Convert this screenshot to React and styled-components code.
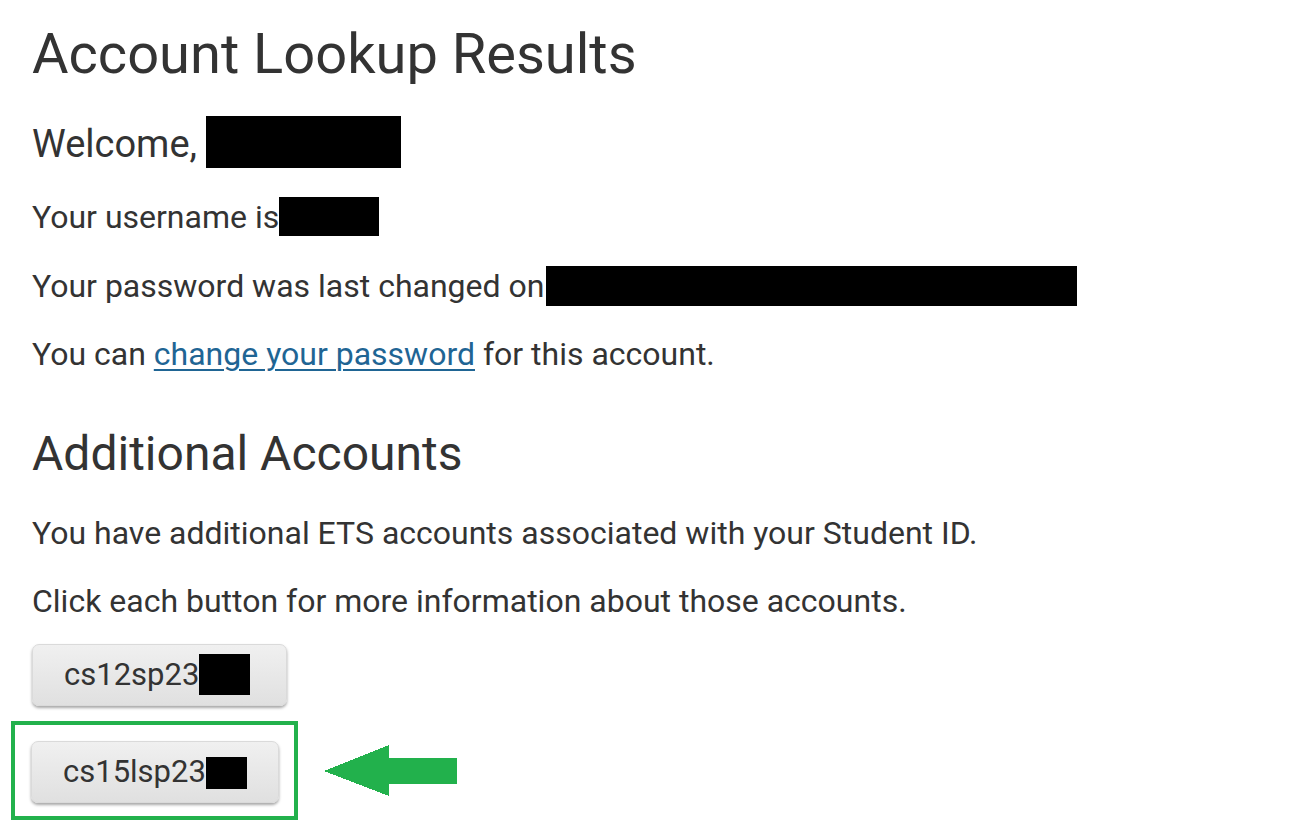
import React from "react";
import styled, { createGlobalStyle } from "styled-components";

const Global = createGlobalStyle`
  html, body { margin: 0; padding: 0; background: #ffffff; }
  body { font-family: Roboto, "Liberation Sans", Arial, sans-serif; color: #333333; }
`;

const Page = styled.main`
  padding: 23px 0 0 32px;
  display: flex;
  flex-direction: column;
  align-items: flex-start;
`;

const Title = styled.h1`
  margin: 0;
  font-size: 56px;
  font-weight: 400;
  line-height: 62px;
  color: #333333;
`;

const Welcome = styled.h3`
  margin: 31px 0 0;
  font-size: 38px;
  font-weight: 400;
  line-height: 56px;
`;

const SubTitle = styled.h2`
  margin: ${(p) => p.$mt}px 0 0;
  font-size: 48px;
  font-weight: 400;
  line-height: 52px;
`;

const Para = styled.p`
  margin: ${(p) => p.$mt}px 0 0;
  font-size: 32px;
  line-height: 42px;
`;

const Link = styled.a`
  color: #1f6594;
  text-decoration: underline;
  text-decoration-thickness: 2px;
  text-underline-offset: 4px;
`;

const Redact = styled.span`
  display: inline-block;
  background: #000000;
  width: ${(p) => p.$w}px;
  height: ${(p) => p.$h}px;
  margin-left: ${(p) => p.$ml || 0}px;
  vertical-align: ${(p) => -p.$drop}px;
`;

const AccountButton = styled.button`
  display: block;
  box-sizing: border-box;
  width: ${(p) => p.$w}px;
  height: 62px;
  margin: ${(p) => p.$mt || 0}px 0 0;
  padding: 0 0 0 31px;
  text-align: left;
  font-family: Roboto, "Liberation Sans", Arial, sans-serif;
  font-size: 31px;
  line-height: 60px;
  color: #333333;
  background: linear-gradient(#f0f0f0, #e0e0e0);
  border: 1px solid #dadada;
  border-radius: 7px;
  box-shadow: 0 2px 3px rgba(0, 0, 0, 0.35);
  cursor: pointer;
  white-space: nowrap;
`;

const HighlightRow = styled.div`
  display: flex;
  align-items: center;
  gap: 26px;
  margin: 15px 0 0 -21px;
`;

const HighlightBox = styled.div`
  border: 4px solid #22b14c;
  padding: 16px 15px 13px 16px;
`;

const Arrow = () => (
  <svg width="134" height="52" viewBox="0 0 134 52" shapeRendering="crispEdges">
    <polygon points="0,26 65,0 65,13 133,13 133,39 65,39 65,51" fill="#22b14c" />
  </svg>
);

export default function App() {
  return (
    <>
      <Global />
      <Page>
        <Title>Account Lookup Results</Title>
        <Welcome>
          Welcome, <Redact $w={195} $h={52} $drop={11} />
        </Welcome>
        <Para $mt={24}>
          Your username is<Redact $w={100} $h={39} $drop={8} />
        </Para>
        <Para $mt={26.5}>
          Your password was last changed on<Redact $w={531} $h={40} $drop={9} $ml={2} />
        </Para>
        <Para $mt={26.5}>
          You can <Link href="#">change your password</Link> for this account.
        </Para>
        <SubTitle $mt={52.5}>Additional Accounts</SubTitle>
        <Para $mt={32.4}>You have additional ETS accounts associated with your Student ID.</Para>
        <Para $mt={26.5}>Click each button for more information about those accounts.</Para>
        <AccountButton $w={255} $mt={22}>
          cs12sp23<Redact $w={51} $h={41} $drop={10} />
        </AccountButton>
        <HighlightRow>
          <HighlightBox>
            <AccountButton $w={248}>
              cs15lsp23<Redact $w={41} $h={32} $drop={7} />
            </AccountButton>
          </HighlightBox>
          <Arrow />
        </HighlightRow>
      </Page>
    </>
  );
}
